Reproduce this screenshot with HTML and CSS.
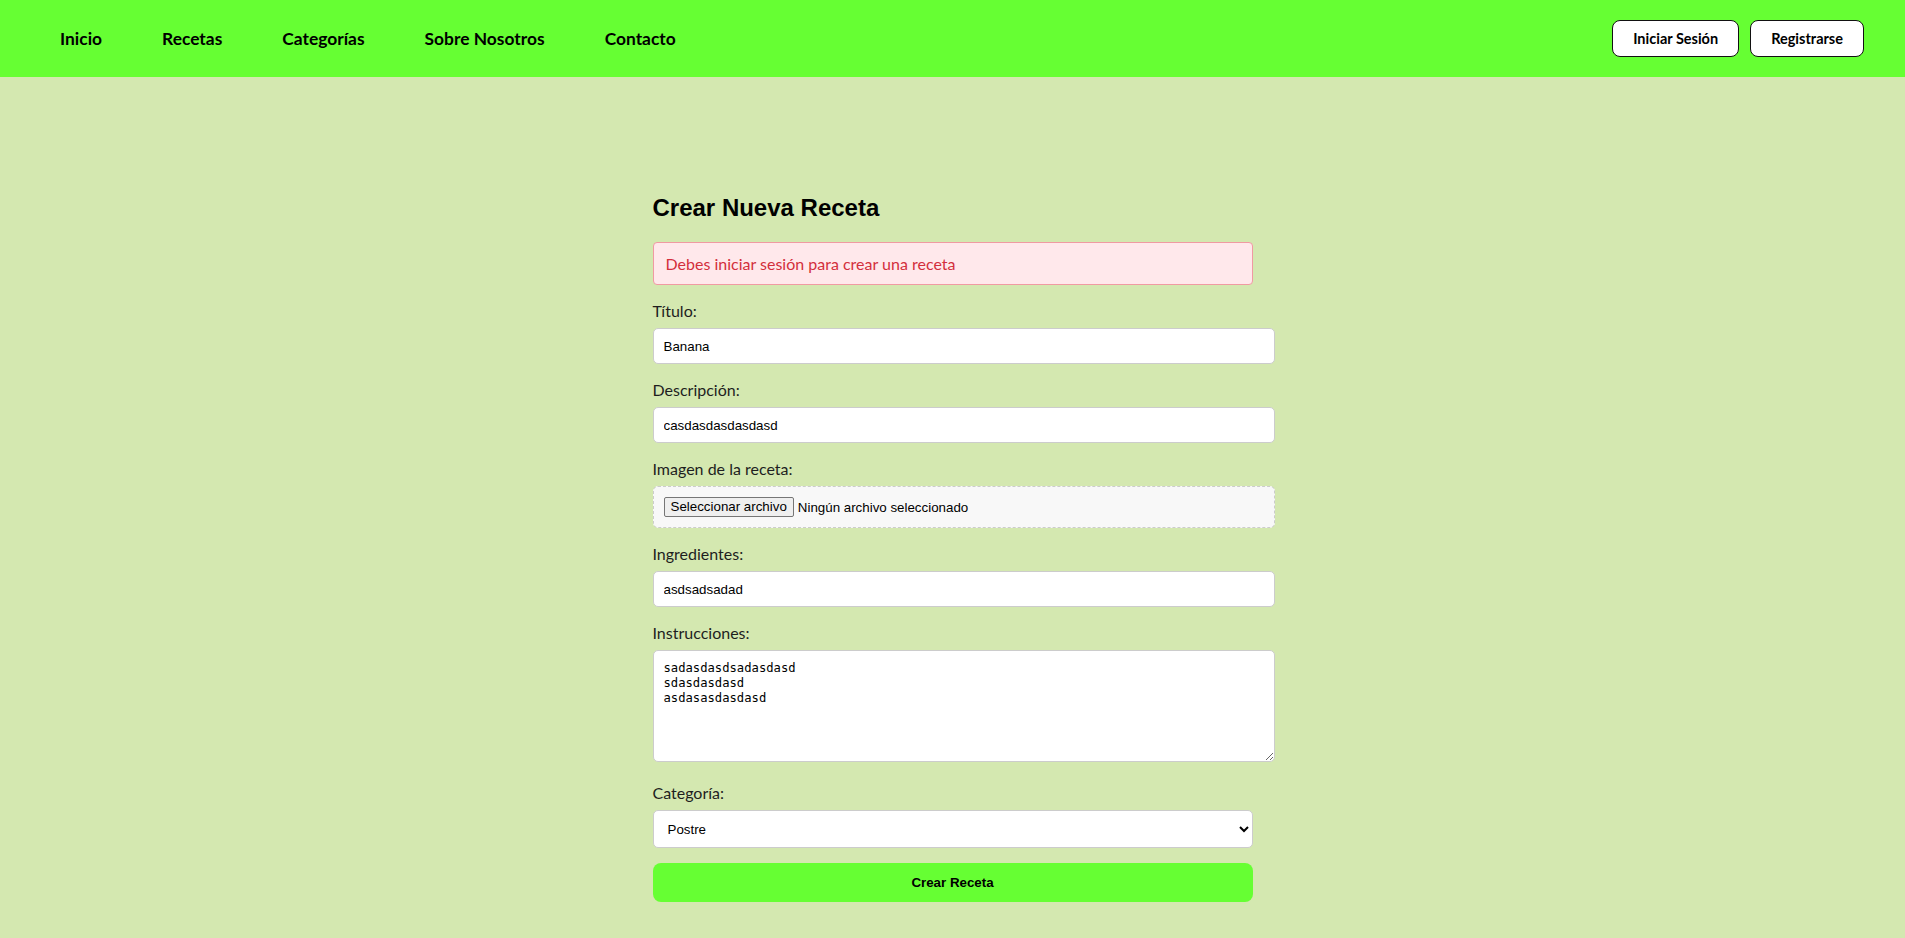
FILE: index.html
```html
<!DOCTYPE html>
<html lang="es">
<head>
<meta charset="utf-8">
<title>Crear Nueva Receta</title>
<link rel="stylesheet" href="styles.css">
</head>
<body>
<header class="topbar">
  <nav class="nav">
    <a href="#" class="nav-link">Inicio</a>
    <a href="#" class="nav-link">Recetas</a>
    <a href="#" class="nav-link">Categorías</a>
    <a href="#" class="nav-link">Sobre Nosotros</a>
    <a href="#" class="nav-link">Contacto</a>
  </nav>
  <div class="auth">
    <button class="auth-btn" type="button">Iniciar Sesión</button>
    <button class="auth-btn" type="button">Registrarse</button>
  </div>
</header>
<main class="container">
  <h2 class="title">Crear Nueva Receta</h2>
  <div class="alert">Debes iniciar sesión para crear una receta</div>
  <form class="form">
    <div class="group">
      <label class="label" for="t">Título:</label>
      <input class="field" id="t" type="text" value="Banana">
    </div>
    <div class="group">
      <label class="label" for="d">Descripción:</label>
      <input class="field" id="d" type="text" value="casdasdasdasdasd">
    </div>
    <div class="group">
      <label class="label" for="i">Imagen de la receta:</label>
      <div class="file-box"><span class="file-btn">Seleccionar archivo</span><span class="file-name">Ningún archivo seleccionado</span></div>
    </div>
    <div class="group">
      <label class="label" for="g">Ingredientes:</label>
      <input class="field" id="g" type="text" value="asdsadsadad">
    </div>
    <div class="group group-area">
      <label class="label" for="n">Instrucciones:</label>
      <textarea class="field area" id="n" spellcheck="false">sadasdasdsadasdasd
sdasdasdasd
asdasasdasdasd</textarea>
    </div>
    <div class="group">
      <label class="label" for="c">Categoría:</label>
      <select class="select" id="c">
        <option>Postre</option>
      </select>
    </div>
    <button class="submit" type="button">Crear Receta</button>
  </form>
</main>
</body>
</html>
```
FILE: styles.css
```css
* { box-sizing: content-box; }
html, body { margin: 0; padding: 0; }
body {
  background: #d4e8b0;
  font-family: Lato, "Open Sans", sans-serif;
  color: #1e1e1e;
  overflow: hidden;
}
.topbar {
  height: 77px;
  background: #66ff33;
  display: flex;
  align-items: center;
  justify-content: space-between;
  padding: 0 41px 0 60px;
}
.nav {
  display: flex;
  gap: 60px;
  align-items: center;
}
.nav-link {
  font-family: Lato, sans-serif;
  font-weight: 700;
  font-size: 17.4px;
  color: #000;
  text-decoration: none;
}
.auth {
  display: flex;
  gap: 11px;
}
.auth-btn {
  height: 37px;
  box-sizing: border-box;
  padding: 0 20px;
  background: #fff;
  border: 1px solid #111;
  border-radius: 8px;
  font-family: Lato, sans-serif;
  font-weight: 700;
  font-size: 14.5px;
  color: #000;
}
.container {
  width: 600px;
  margin: 0 auto;
  padding: 117px 0 20px;
}
.title {
  margin: 0 0 20px;
  font-family: "Liberation Sans", Arial, sans-serif;
  font-size: 24px;
  font-weight: 700;
  color: #000;
}
.alert {
  padding: 11px 12px;
  line-height: 19px;
  background: #ffe8eb;
  border: 1px solid #f09aa2;
  border-radius: 4px;
  color: #d32f3c;
  font-size: 16px;
  margin-bottom: 15px;
}
.group { margin-bottom: 15px; }
.group-area { margin-bottom: 20px; }
.label {
  display: block;
  font-size: 16px;
  line-height: 22px;
  margin-bottom: 6px;
  color: #1e1e1e;
}
.field {
  display: block;
  width: 100%;
  padding: 10px;
  height: 14px;
  border: 1px solid #ccc;
  border-radius: 5px;
  background: #fff;
  font-family: "Liberation Sans", Arial, sans-serif;
  font-size: 13.33px;
  color: #000;
  margin: 0;
}
.area {
  height: 90px;
  font-family: "DejaVu Sans Mono", monospace;
  font-size: 12.2px;
  line-height: 15px;
  resize: vertical;
}
.file-box {
  width: 100%;
  padding: 10px;
  height: 20px;
  border: 1px dashed #ccc;
  border-radius: 5px;
  background: #f8f8f8;
  display: flex;
  align-items: center;
  font-family: "Liberation Sans", Arial, sans-serif;
  font-size: 13.33px;
  color: #000;
}
.file-btn {
  border: 1px solid #767676;
  border-radius: 2px;
  background: #efefef;
  padding: 1px 6px;
  line-height: 16px;
  margin-right: 4px;
}
.select {
  display: block;
  width: 600px;
  box-sizing: border-box;
  height: 38px;
  padding: 0 10px;
  border: 1px solid #ccc;
  border-radius: 5px;
  background: #fff;
  font-family: "Liberation Sans", Arial, sans-serif;
  font-size: 13.33px;
  color: #000;
}
.submit {
  display: block;
  width: 600px;
  box-sizing: border-box;
  height: 39px;
  padding: 0;
  border: none;
  border-radius: 8px;
  background: #66ff33;
  font-family: "Liberation Sans", Arial, sans-serif;
  font-size: 13.33px;
  font-weight: 700;
  color: #000;
}
```
